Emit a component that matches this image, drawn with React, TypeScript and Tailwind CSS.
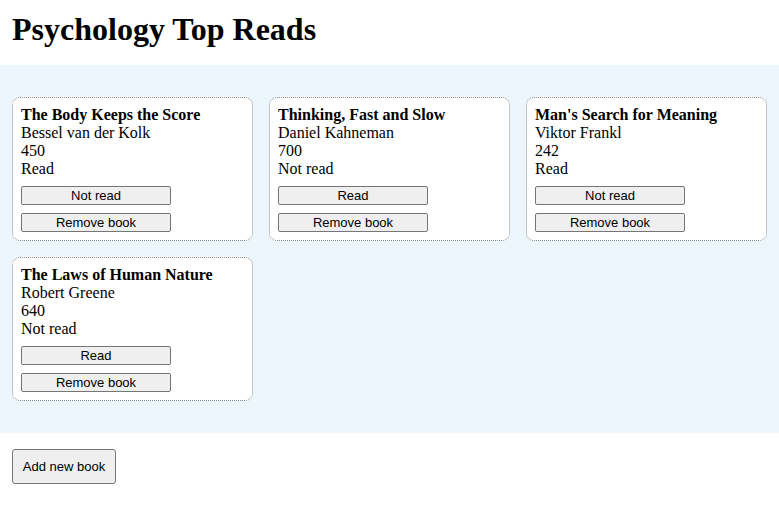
const books = [
  { title: 'The Body Keeps the Score', author: 'Bessel van der Kolk', pages: 450, read: true },
  { title: 'Thinking, Fast and Slow', author: 'Daniel Kahneman', pages: 700, read: false },
  { title: "Man's Search for Meaning", author: 'Viktor Frankl', pages: 242, read: true },
  { title: 'The Laws of Human Nature', author: 'Robert Greene', pages: 640, read: false },
];

const btn =
  'block w-[150px] h-[19px] bg-[#efefef] border border-[#767676] rounded-[2px] text-[13px] leading-[16px] text-black font-["Liberation_Sans",Arial,sans-serif]';

export default function App() {
  return (
    <div className='min-h-[524px] bg-white text-black font-["Liberation_Serif","Times_New_Roman",serif] text-[16px]'>
      <h1 className="px-3 pt-[11px] pb-[17px] text-[32px] leading-[37px] font-bold">
        Psychology Top Reads
      </h1>

      <div className="bg-[#eef6fd] px-3 pt-8 pb-8 grid grid-cols-3 gap-4">
        {books.map((book) => (
          <div
            key={book.title}
            className="bg-white border border-dotted border-[#8a8a8a] rounded-lg p-2 leading-[18px]"
          >
            <div className="font-bold">{book.title}</div>
            <div>{book.author}</div>
            <div>{book.pages}</div>
            <div>{book.read ? 'Read' : 'Not read'}</div>
            <button className={`${btn} mt-2`}>{book.read ? 'Not read' : 'Read'}</button>
            <button className={`${btn} mt-2`}>Remove book</button>
          </div>
        ))}
      </div>

      <div className="px-3 pt-4">
        <button className='w-[104px] h-[35px] bg-[#efefef] border border-[#767676] rounded-[3px] text-[13px] text-black font-["Liberation_Sans",Arial,sans-serif]'>
          Add new book
        </button>
      </div>
    </div>
  );
}
